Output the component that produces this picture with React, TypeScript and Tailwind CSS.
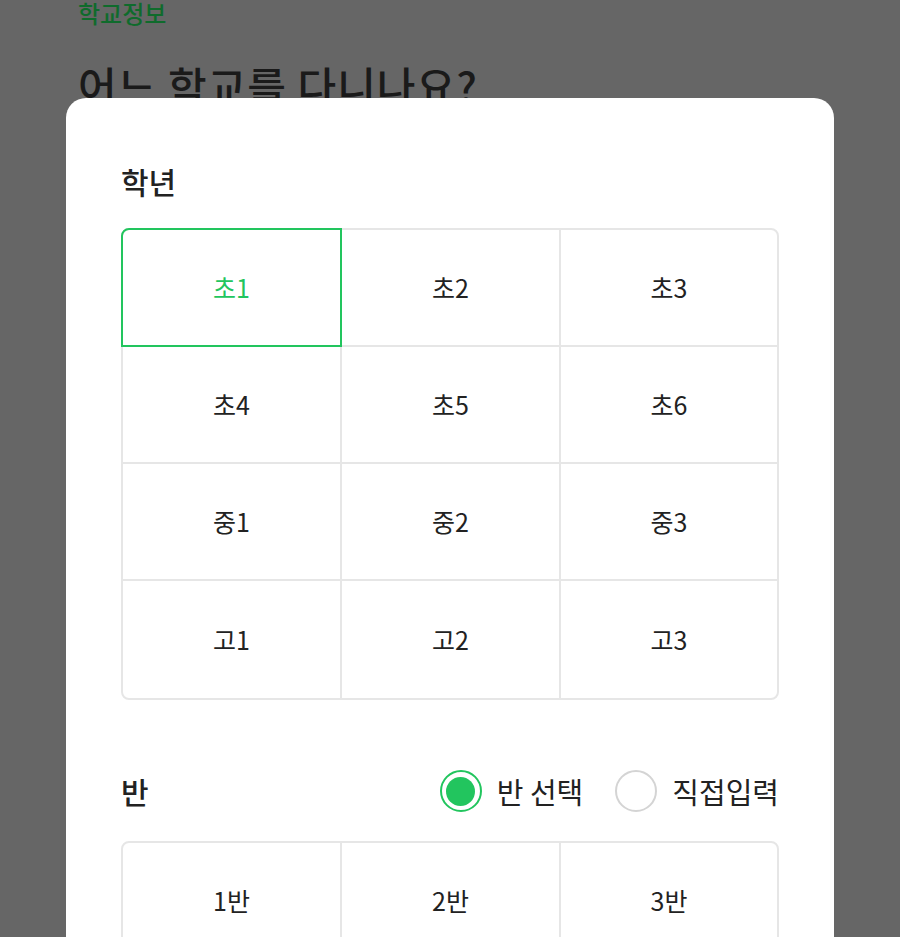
import { useState } from 'react'

const grades = ['초1', '초2', '초3', '초4', '초5', '초6', '중1', '중2', '중3', '고1', '고2', '고3']
const classes = ['1반', '2반', '3반', '4반', '5반', '6반']

const font = { fontFamily: '"Noto Sans CJK KR", "Noto Sans", sans-serif' }

function Radio({ checked, label, onClick }: { checked: boolean; label: string; onClick: () => void }) {
    return (
        <button onClick={onClick} className="flex items-center gap-[15px]">
            <span className={`flex h-[42px] w-[42px] items-center justify-center rounded-full border-[2.5px] ${checked ? 'border-[#22c55e]' : 'border-[#d4d4d4]'}`}>
                {checked && <span className="h-[29px] w-[29px] rounded-full bg-[#22c55e]" />}
            </span>
            <span className="text-[29px] leading-none text-[#222]">{label}</span>
        </button>
    )
}

function OptionGrid({ items, selected, onSelect }: { items: string[]; selected: string; onSelect: (v: string) => void }) {
    const rows = Math.ceil(items.length / 3)
    return (
        <div className="grid grid-cols-[219px_219px_1fr] rounded-lg border-2 border-[#e6e6e6]">
            {items.map((g, i) => {
                const lastRow = Math.floor(i / 3) === rows - 1
                const lastCol = i % 3 === 2
                const active = g === selected
                return (
                    <button key={g} onClick={() => onSelect(g)}
                        className={`relative flex h-[117px] items-center justify-center ${lastRow ? '' : 'border-b-2'} ${lastCol ? '' : 'border-r-2'} border-[#e6e6e6] text-[25px] ${active ? 'text-[#22c55e]' : 'text-[#222]'}`}>
                        {active && <span className="absolute -top-[2px] -left-[2px] -right-[2px] -bottom-[2px] rounded-tl-lg border-2 border-[#22c55e]" />}
                        {g}
                    </button>
                )
            })}
        </div>
    )
}

export default function App() {
    const [grade, setGrade] = useState('초1')
    const [klass, setKlass] = useState('')
    const [mode, setMode] = useState<'select' | 'input'>('select')

    return (
        <div className="relative h-[937px] w-[900px] overflow-hidden bg-[#666666]" style={font}>
            <div className="px-[78px]">
                <div className="-mt-[3px] text-[24px] font-medium leading-8 text-[#0f6b2c]">학교정보</div>
                <div className="mt-[30px] text-[42px] font-medium leading-tight tracking-wide text-[#1a1a1a]">어느 학교를 다니나요?</div>
            </div>

            <div className="absolute left-[66px] top-[98px] w-[768px] rounded-t-[20px] bg-white px-[55px] pt-[63px] pb-10">
                <h2 className="mb-[27px] h-10 text-[30px] font-medium leading-10 text-[#222]">학년</h2>
                <OptionGrid items={grades} selected={grade} onSelect={setGrade} />

                <div className="mt-[67px] mb-[26px] flex h-12 items-center justify-between">
                    <h2 className="text-[30px] font-medium text-[#222]">반</h2>
                    <div className="flex items-center gap-[32px]">
                        <Radio checked={mode === 'select'} label="반 선택" onClick={() => setMode('select')} />
                        <Radio checked={mode === 'input'} label="직접입력" onClick={() => setMode('input')} />
                    </div>
                </div>
                <OptionGrid items={classes} selected={klass} onSelect={setKlass} />
            </div>
        </div>
    )
}
